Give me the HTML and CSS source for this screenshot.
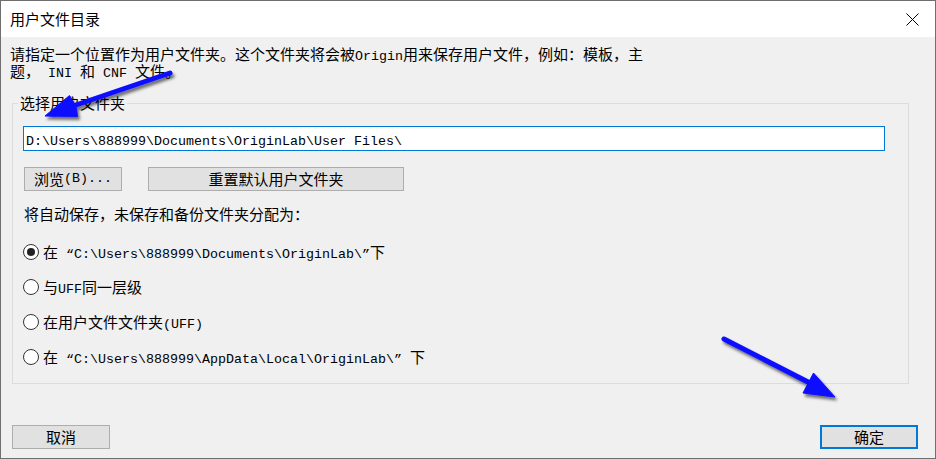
FILE: index.html
```html
<!DOCTYPE html>
<html lang="zh-CN">
<head>
<meta charset="utf-8">
<title>用户文件目录</title>
<link rel="stylesheet" href="styles.css">
</head>
<body>
<div class="window">
  <div class="titlebar">
    <span class="title">用户文件目录</span>
    <span class="close" aria-label="关闭">
      <svg width="13" height="13" viewBox="0 0 13 13"><path d="M0.5 0.5 L12.5 12.5 M12.5 0.5 L0.5 12.5" stroke="#000" stroke-width="1" fill="none"/></svg>
    </span>
  </div>
  <div class="body">
    <p class="intro">请指定一个位置作为用户文件夹。这个文件夹将会被<span class="lat">Origin</span>用来保存用户文件，例如：模板，主<br>题，<span class="lat"> INI </span>和<span class="lat"> CNF </span>文件。</p>
    <fieldset class="group">
      <legend>选择用户文件夹</legend>
      <div class="path-input"><span class="lat">D:\Users\888999\Documents\OriginLab\User Files\</span></div>
      <div class="btn-row">
        <button class="btn browse">浏览<span class="lat">(B)...</span></button>
        <button class="btn reset">重置默认用户文件夹</button>
      </div>
      <p class="assign">将自动保存，未保存和备份文件夹分配为：</p>
      <div class="radios">
        <div class="radio-row"><span class="radio checked"></span><span class="label">在<span class="lat"> “C:\Users\888999\Documents\OriginLab\”</span>下</span></div>
        <div class="radio-row"><span class="radio"></span><span class="label">与<span class="lat narrow">UFF</span>同一层级</span></div>
        <div class="radio-row"><span class="radio"></span><span class="label">在用户文件文件夹<span class="lat">(UFF)</span></span></div>
        <div class="radio-row"><span class="radio"></span><span class="label">在<span class="lat"> “C:\Users\888999\AppData\Local\OriginLab\” </span>下</span></div>
      </div>
    </fieldset>
    <div class="footer">
      <button class="btn">取消</button>
      <button class="btn primary">确定</button>
    </div>
  </div>
  <svg class="arrows" width="936" height="459" viewBox="0 0 936 459">
    <defs>
      <filter id="sh" x="-20%" y="-40%" width="140%" height="180%">
        <feDropShadow dx="2" dy="3" stdDeviation="1.8" flood-color="#000" flood-opacity="0.55"/>
      </filter>
    </defs>
    <g filter="url(#sh)" fill="#0a0aff" stroke="#0a0aff">
      <line x1="170" y1="73" x2="76" y2="105" stroke-width="5" stroke-linecap="round"/>
      <polygon points="45,116 69.5,95.5 76,106 77.5,116.5" stroke-width="1" stroke-linejoin="round"/>
      <line x1="724" y1="339" x2="810" y2="383" stroke-width="5" stroke-linecap="round"/>
      <polygon points="835,397 813.5,373 808,383.5 803,393" stroke-width="1" stroke-linejoin="round"/>
    </g>
  </svg>
</div>
</body>
</html>
```

FILE: styles.css
```css
html, body {
  margin: 0;
  padding: 0;
  background: #f0f0f0;
}

.window {
  position: relative;
  width: 936px;
  height: 459px;
  box-sizing: border-box;
  border: 1px solid #6f6f6f;
  background: #f0f0f0;
  display: flex;
  flex-direction: column;
  font-family: "Noto Sans CJK SC", sans-serif;
  font-size: 15px;
  color: #000;
  overflow: hidden;
}

.lat {
  font-family: "Liberation Mono", monospace;
  font-size: 13.33px;
  line-height: 10px;
}

.titlebar {
  height: 36px;
  flex: none;
  background: #fff;
  display: flex;
  align-items: center;
  justify-content: space-between;
  padding-left: 9px;
}

.title {
  line-height: 20px;
}

.close {
  width: 45px;
  height: 36px;
  display: flex;
  align-items: center;
  justify-content: center;
}

.close svg {
  display: block;
}

.body {
  flex: 1;
  display: flex;
  flex-direction: column;
  padding-top: 8px;
}

.intro {
  margin: 0 0 0 9px;
  line-height: 17px;
}

.group {
  margin: 14px 26px 0 11px;
  padding: 0 10px 9px 10px;
  border: 1px solid #dcdcdc;
  min-width: 0;
}

.group legend {
  padding: 0 2px;
  margin-left: -5px;
  line-height: 20px;
}

.path-input {
  margin-top: 13px;
  height: 25px;
  box-sizing: border-box;
  width: 862px;
  border: 1px solid #0078d7;
  background: #fff;
  padding-left: 2px;
  line-height: 23px;
  white-space: nowrap;
}

.btn-row {
  display: flex;
  gap: 26px;
  margin-top: 16px;
  padding-left: 1px;
}

.btn {
  height: 24px;
  box-sizing: border-box;
  border: 1px solid #adadad;
  background: #e1e1e1;
  font-family: "Noto Sans CJK SC", sans-serif;
  font-size: 15px;
  color: #000;
  padding: 0;
  line-height: 20px;
  display: flex;
  align-items: center;
  justify-content: center;
  width: 98px;
}

.btn.reset {
  width: 256px;
}

.assign {
  margin: 13px 0 0 1px;
  line-height: 20px;
}

.radios {
  margin-top: 10px;
  display: flex;
  flex-direction: column;
}

.radio-row {
  height: 35px;
  display: flex;
  align-items: center;
  gap: 4px;
  line-height: 20px;
  white-space: nowrap;
}

.radio {
  width: 16px;
  height: 16px;
  box-sizing: border-box;
  border: 1px solid #333;
  border-radius: 50%;
  background: #fff;
  display: flex;
  align-items: center;
  justify-content: center;
  flex: none;
}

.radio.checked::after {
  content: "";
  width: 8px;
  height: 8px;
  border-radius: 50%;
  background: #222;
}

.footer {
  margin-top: auto;
  display: flex;
  justify-content: space-between;
  padding: 0 17px 9px 11px;
}

.btn.primary {
  border: 2px solid #0078d7;
}

.arrows {
  position: absolute;
  left: -1px;
  top: -1px;
  pointer-events: none;
}
```
